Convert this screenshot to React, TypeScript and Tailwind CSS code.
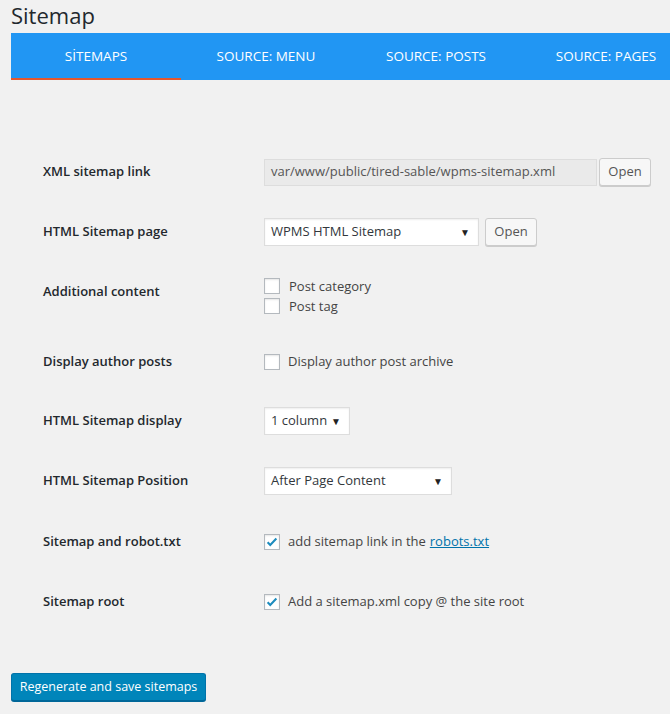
import type { ReactNode } from "react";

const TABS = ["SİTEMAPS", "SOURCE: MENU", "SOURCE: POSTS", "SOURCE: PAGES"];

function Checkbox({ checked = false }: { checked?: boolean }) {
  return (
    <span className="flex h-4 w-4 shrink-0 items-center justify-center border border-[#b4b9be] bg-white shadow-[inset_0_1px_2px_rgba(0,0,0,0.1)]">
      {checked && (
        <svg viewBox="0 0 16 16" className="h-[14px] w-[14px]">
          <path d="M3 8.2l3 3.1L13 4" fill="none" stroke="#1e8cbe" strokeWidth="2.4" />
        </svg>
      )}
    </span>
  );
}

function Select({ value, width }: { value: string; width: string }) {
  return (
    <div
      className={`flex h-[28px] ${width} items-center justify-between border border-[#ddd] bg-white pl-[6px] pr-[8px] text-[13px] text-[#32373c] shadow-[inset_0_1px_2px_rgba(0,0,0,0.07)]`}
    >
      <span>{value}</span>
      <span className="text-[10px] leading-none text-[#222]">▼</span>
    </div>
  );
}

function OpenButton() {
  return (
    <button className="flex h-[28px] w-[52px] items-center justify-center rounded-[3px] border border-[#ccc] bg-[#f7f7f7] text-[13px] text-[#555] shadow-[0_1px_0_#ccc]">
      Open
    </button>
  );
}

function Row({
  label,
  height,
  children,
  top = false,
  gap = "gap-[6px]",
}: {
  label: string;
  height: string;
  children: ReactNode;
  top?: boolean;
  gap?: string;
}) {
  return (
    <div className={`flex ${height} ${top ? "items-start pt-[14px]" : "items-center"}`}>
      <div
        className={`w-[221px] shrink-0 text-[13px] font-semibold text-[#23282d] ${top ? "pt-[6px]" : ""}`}
      >
        {label}
      </div>
      <div className={`flex items-center ${gap}`}>{children}</div>
    </div>
  );
}

export default function App() {
  return (
    <div className="h-[714px] w-[670px] overflow-hidden bg-[#f1f1f1] pl-[11px] font-['Open_Sans',sans-serif] text-[#444]">
      <h1 className="flex h-[33px] items-start pt-[1px] text-[22px] leading-[29px] font-normal text-[#23282d]">
        Sitemap
      </h1>

      {/* tab bar */}
      <div className="flex h-[47px] overflow-hidden bg-[#2196f3]">
        {TABS.map((t, i) => (
          <div
            key={t}
            className={`flex w-[170px] shrink-0 items-center justify-center text-[13.5px] text-white ${
              i === 0 ? "border-b-2 border-[#e4572e] pt-[2px]" : ""
            }`}
          >
            {t}
          </div>
        ))}
      </div>

      <div className="mt-[62px] pl-[32px]">
        <Row label="XML sitemap link" height="h-[60px]" gap="gap-[2px]">
          <div className="flex h-[27px] w-[333px] items-center border border-[#ddd] bg-[#eaeaea] px-[6px] text-[13px] text-[#555]">
            var/www/public/tired-sable/wpms-sitemap.xml
          </div>
          <OpenButton />
        </Row>

        <Row label="HTML Sitemap page" height="h-[60px]">
          <Select value="WPMS HTML Sitemap" width="w-[215px]" />
          <OpenButton />
        </Row>

        <Row label="Additional content" height="h-[70px]" top>
          <div className="flex flex-col">
            <label className="flex items-center gap-[9px] text-[13px] leading-[20px] text-[#444]">
              <Checkbox /> Post category
            </label>
            <label className="flex items-center gap-[9px] text-[13px] leading-[20px] text-[#444]">
              <Checkbox /> Post tag
            </label>
          </div>
        </Row>

        <Row label="Display author posts" height="h-[60px]">
          <label className="flex items-center gap-[8px] text-[13px] text-[#444]">
            <Checkbox /> Display author post archive
          </label>
        </Row>

        <Row label="HTML Sitemap display" height="h-[58px]">
          <Select value="1 column" width="w-[86px]" />
        </Row>

        <Row label="HTML Sitemap Position" height="h-[62px]">
          <Select value="After Page Content" width="w-[188px]" />
        </Row>

        <Row label="Sitemap and robot.txt" height="h-[60px]">
          <label className="flex items-center gap-[8px] text-[13px] text-[#444]">
            <Checkbox checked /> add sitemap link in the{" "}
            <a className="-ml-[4px] text-[#0073aa] underline">robots.txt</a>
          </label>
        </Row>

        <Row label="Sitemap root" height="h-[60px]">
          <label className="flex items-center gap-[8px] text-[13px] text-[#444]">
            <Checkbox checked /> Add a sitemap.xml copy @ the site root
          </label>
        </Row>
      </div>

      <button className="mt-[41px] flex h-[28px] w-[195px] items-center justify-center rounded-[3px] border border-[#0073aa] border-b-[#006799] bg-[#0085ba] text-[12.5px] text-white shadow-[0_1px_0_#006799]">
        Regenerate and save sitemaps
      </button>
    </div>
  );
}
